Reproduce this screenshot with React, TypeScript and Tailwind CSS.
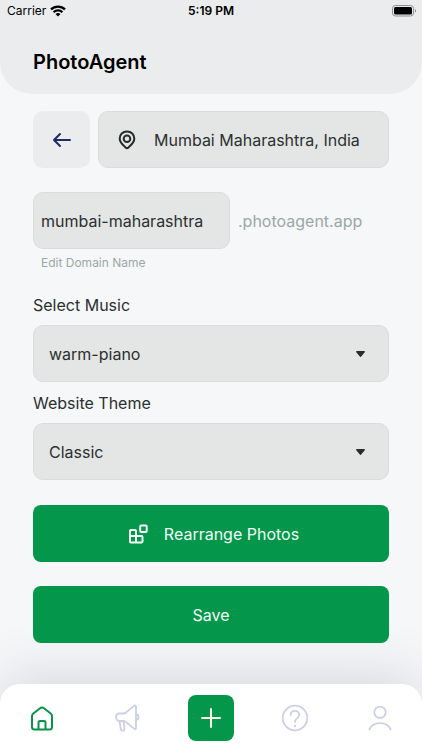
import { useState } from 'react';

const fieldStyle = 'h-[57px] rounded-[10px] border border-[#dcdcdc] bg-[#e4e6e5] text-base text-[#2b3030]';

function StatusBar() {
    return (
        <div className="grid h-[22px] grid-cols-3 items-center px-[7px] text-xs text-black">
            <div className="flex items-center gap-1">
                <span>Carrier</span>
                <svg width="16" height="12" viewBox="0 0 16 12" fill="none" stroke="currentColor" strokeWidth="2.3">
                    <path d="M1 4.4C4.9.6 11.1.6 15 4.4" />
                    <path d="M3.6 7.2C6 4.8 10 4.8 12.4 7.2" />
                    <path d="M8 11.6 5.5 9.1a3.6 3.6 0 0 1 5 0z" fill="currentColor" stroke="none" />
                </svg>
            </div>
            <span className="text-center font-semibold">5:19 PM</span>
            <svg className="-mr-0.5 justify-self-end" width="25" height="12" viewBox="0 0 25 12">
                <rect x=".5" y=".5" width="21" height="10.5" rx="3" fill="none" stroke="#8e8e90" />
                <rect x="2" y="2" width="18" height="7.5" rx="1.5" fill="#000" />
                <path d="M23 4v3.6c1.5-.5 1.5-3.1 0-3.6z" fill="#8e8e90" />
            </svg>
        </div>
    );
}

interface SelectFieldProps {
    id: string;
    label: string;
    value: string;
    options: string[];
    onChange: (value: string) => void;
}

function SelectField({ id, label, value, options, onChange }: SelectFieldProps) {
    return (
        <div className="flex flex-col gap-2">
            <label htmlFor={id} className="text-base text-[#2b3030]">
                {label}
            </label>
            <div className="relative">
                <select
                    id={id}
                    value={value}
                    onChange={(e) => onChange(e.target.value)}
                    className={`${fieldStyle} w-full appearance-none px-[15px]`}
                >
                    {options.map((option) => (
                        <option key={option}>{option}</option>
                    ))}
                </select>
                <svg
                    className="pointer-events-none absolute inset-y-0 right-6 my-auto"
                    width="9"
                    height="6"
                    viewBox="0 0 9 6"
                    fill="#2b2b2b"
                >
                    <path d="M.8 0h7.4c.7 0 1 .7.5 1.2L5.2 5.6a.9.9 0 0 1-1.4 0L.3 1.2C-.2.7.1 0 .8 0z" />
                </svg>
            </div>
        </div>
    );
}

function BottomNav() {
    return (
        <nav className="mt-auto grid h-[66px] grid-cols-5 items-center justify-items-center rounded-t-[20px] bg-white pt-0.5 text-[#cdd0e3] shadow-[0_-8px_56px_#d5d8dc]">
            <button aria-label="Home" className="text-[#07944a]">
                <svg width="24" height="26" viewBox="0 0 24 26" fill="none" stroke="currentColor" strokeWidth="2" strokeLinejoin="round">
                    <path d="M2 11.2c0-1.2.4-2 1.3-2.7L10 3.300c1.200-1 2.800-1 4 0l6.700 5.200c.9.7 1.300 1.500 1.300 2.700V22c0 1.700-1 2.500-2.500 2.500h-15C3 24.500 2 23.700 2 22z" />
                    <path d="M8.5 24.5v-7c0-.9.5-1.500 1.500-1.500h4c1 0 1.500.6 1.500 1.500v7" />
                </svg>
            </button>
            <button aria-label="Promote">
                <svg width="26" height="28" viewBox="0 0 26 28" fill="none" stroke="currentColor" strokeWidth="1.8" strokeLinecap="round" strokeLinejoin="round">
                    <path d="M5.5 9.500h3.700c1 0 1.900-.3 2.700-1l8.500-6.900c.7-.5 1.600-.1 1.600.8v21.800c0 .9-.9 1.300-1.600.7L11.900 18c-.8-.7-1.700-1-2.700-1H5.500C3.500 17 2 15.500 2 13.200s1.500-3.700 3.500-3.700z" />
                    <path d="M22 10.500c3.300.3 3.300 5.200 0 5.500M5.500 17l1.300 8.300c.4 2 3.900 1.800 3.700-.3L9.500 17" />
                </svg>
            </button>
            <button aria-label="Add" className="flex size-[46px] items-center justify-center rounded-lg bg-[#04964a]">
                <svg width="20" height="20" viewBox="0 0 20 20" fill="none" stroke="#fff9e8" strokeWidth="2" strokeLinecap="round">
                    <path d="M10 1v18M1 10h18" />
                </svg>
            </button>
            <button aria-label="Help">
                <svg width="28" height="28" viewBox="0 0 28 28" fill="none" stroke="currentColor" strokeWidth="1.8" strokeLinecap="round">
                    <circle cx="14" cy="14" r="12.3" />
                    <path d="M9.700 11c0-5.500 8.600-5.500 8.600-.2 0 3.500-4.300 3.200-4.300 7.200" />
                    <circle cx="14" cy="22" r="1.2" fill="currentColor" stroke="none" />
                </svg>
            </button>
            <button aria-label="Profile">
                <svg width="24" height="28" viewBox="0 0 24 28" fill="none" stroke="currentColor" strokeWidth="1.8" strokeLinecap="round">
                    <circle cx="12" cy="8.3" r="5.7" />
                    <path d="M1.300 25.500c4-8.500 17.400-8.500 21.400 0" />
                </svg>
            </button>
        </nav>
    );
}

export default function App() {
    const [location, setLocation] = useState('Mumbai Maharashtra, India');
    const [domain, setDomain] = useState('mumbai-maharashtra');
    const [music, setMusic] = useState('warm-piano');
    const [theme, setTheme] = useState('Classic');

    return (
        <div className="flex min-h-screen flex-col overflow-hidden bg-[#f6f7f9] font-['Inter',sans-serif]">
            <header className="h-[94px] rounded-b-[32px] bg-[#ebeced]">
                <StatusBar />
                <h1 className="px-[33px] pt-[26px] text-xl font-semibold text-black">PhotoAgent</h1>
            </header>

            <main className="z-10 flex flex-col px-[33px] pt-[17px] pb-6">
                <div className="flex gap-2">
                    <button
                        aria-label="Back"
                        className="flex size-[57px] shrink-0 items-center justify-center rounded-[10px] bg-[#ebecee]"
                    >
                        <svg width="20" height="16" viewBox="0 0 20 16" fill="none" stroke="#1b2d62" strokeWidth="2" strokeLinecap="round" strokeLinejoin="round">
                            <path d="M18 8H2M8 2 2 8l6 6" />
                        </svg>
                    </button>
                    <label className={`${fieldStyle} flex min-w-0 flex-1 items-center gap-[18px] pl-[19px]`}>
                        <svg className="shrink-0" width="18" height="20" viewBox="0 0 18 20" fill="none" stroke="#252b2b" strokeWidth="2">
                            <path d="M9 1.500c4.300 0 7.300 3 7.300 7 0 4.200-3.300 6.600-5.800 8.900a2.200 2.200 0 0 1-3 0C5 15.100 1.700 12.700 1.700 8.500c0-4 3-7 7.300-7z" />
                            <circle cx="9" cy="8.8" r="3.3" />
                        </svg>
                        <input
                            aria-label="Location"
                            value={location}
                            onChange={(e) => setLocation(e.target.value)}
                            className="min-w-0 flex-1 bg-transparent outline-none"
                        />
                    </label>
                </div>

                <div className="mt-6 flex items-center gap-2">
                    <input
                        id="domain"
                        value={domain}
                        onChange={(e) => setDomain(e.target.value)}
                        className={`${fieldStyle} w-[197px] px-[7px] outline-none`}
                    />
                    <span className="text-base text-[#9aa8a3]">.photoagent.app</span>
                </div>
                <label htmlFor="domain" className="mt-1.5 pl-2 text-xs leading-4 text-[#9aa8a3]">
                    Edit Domain Name
                </label>

                <div className="mt-[22px] flex flex-col gap-[9px]">
                    <SelectField
                        id="music"
                        label="Select Music"
                        value={music}
                        options={['warm-piano']}
                        onChange={setMusic}
                    />
                    <SelectField
                        id="theme"
                        label="Website Theme"
                        value={theme}
                        options={['Classic']}
                        onChange={setTheme}
                    />
                </div>

                <div className="mt-[25px] flex flex-col gap-6 text-base text-[#f2fff7]">
                    <button className="flex h-[57px] items-center justify-center gap-4 rounded-lg bg-[#04964a] pl-1.5">
                        <svg width="19" height="20" viewBox="0 0 19 20" fill="none" stroke="currentColor" strokeWidth="2" strokeLinejoin="round">
                            <path d="M2 6h4c.7 0 1 .3 1 1v5h5.500c.7 0 1 .3 1 1v4.500c0 .7-.3 1-1 1H2c-.7 0-1-.3-1-1V7c0-.7.3-1 1-1zM1 12h6v6.500" />
                            <rect x="11.2" y="1.5" width="6.5" height="6.5" rx="1" />
                        </svg>
                        Rearrange Photos
                    </button>
                    <button className="h-[57px] rounded-lg bg-[#04964a]">Save</button>
                </div>
            </main>

            <BottomNav />
        </div>
    );
}
